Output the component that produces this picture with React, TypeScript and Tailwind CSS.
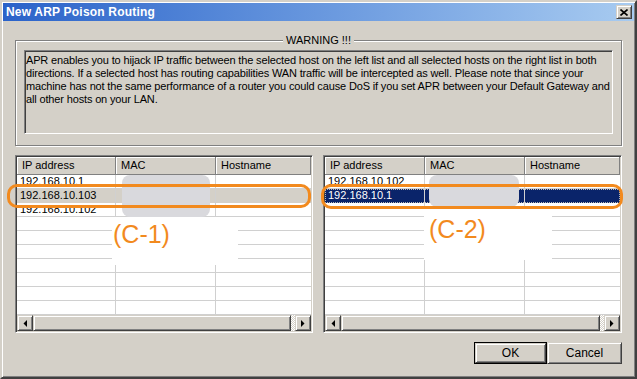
import React from "react";

const raised =
  "border border-t-[#d4d0c8] border-l-[#d4d0c8] border-r-[#404040] border-b-[#404040] shadow-[inset_1px_1px_0_#fff,inset_-1px_-1px_0_#808080] bg-[#d4d0c8]";
const sunken =
  "border border-t-[#808080] border-l-[#808080] border-r-[#fff] border-b-[#fff] shadow-[inset_1px_1px_0_#404040,inset_-1px_-1px_0_#d4d0c8]";

function Arrow({ dir }: { dir: "left" | "right" }) {
  return (
    <div className={`w-[16px] h-[16px] flex items-center justify-center ${raised}`}>
      <svg width="4" height="7" viewBox="0 0 4 7">
        {dir === "left" ? (
          <polygon points="4,0 4,7 0.5,3.5" fill="#000" />
        ) : (
          <polygon points="0,0 0,7 3.5,3.5" fill="#000" />
        )}
      </svg>
    </div>
  );
}

type ListProps = {
  rows: string[];
  selected: number;
  active: boolean;
  cols: number[];
};

function ListView({ rows, selected, active, cols }: ListProps) {
  const allRows = Array.from({ length: 10 }, (_, i) => rows[i] ?? "");
  const headers = ["IP address", "MAC", "Hostname"];
  return (
    <div className={`flex flex-col h-full bg-white ${sunken} p-[1px]`}>
      <div className="flex h-[18px] shrink-0">
        {headers.map((h, i) => (
          <div
            key={h}
            style={{ width: cols[i] }}
            className={`h-full flex items-center pl-[5px] text-[11px] text-black bg-[#d4d0c8] border-r border-b border-r-[#808080] border-b-[#808080] shadow-[inset_1px_1px_0_#fff] ${i === 2 ? "flex-1" : "shrink-0"}`}
          >
            {h}
          </div>
        ))}
      </div>
      <div className="flex-1 flex flex-col bg-white">
        {allRows.map((r, i) => {
          const isSel = i === selected;
          const rowBg = isSel
            ? active
              ? "bg-[#0a246a] text-white outline outline-1 outline-dotted outline-[#b8b8b8] -outline-offset-1"
              : "bg-[#d4d0c8] text-black"
            : "text-black";
          return (
            <div key={i} className={`flex h-[14px] ${rowBg}`}>
              {[0, 1, 2].map((c) => (
                <div
                  key={c}
                  style={c < 2 ? { width: cols[c] } : undefined}
                  className={`h-full text-[11px] leading-[13px] pl-[3px] whitespace-nowrap overflow-hidden ${c === 2 ? "flex-1" : "shrink-0 border-r border-r-[#d0d0d0]"} ${isSel ? "" : "border-b border-b-[#d0d0d0]"}`}
                >
                  {c === 0 ? r : ""}
                </div>
              ))}
            </div>
          );
        })}
      </div>
      <div className="flex h-[16px] shrink-0">
        <Arrow dir="left" />
        <div className="flex-1 flex">
          <div className={`flex-1 ${raised}`} />
          <div className="w-[4px] bg-[repeating-conic-gradient(#fff_0_25%,#d4d0c8_0_50%)] bg-[length:2px_2px]" />
        </div>
        <Arrow dir="right" />
      </div>
    </div>
  );
}

export default function App() {
  return (
    <div
      className="relative w-[637px] h-[379px] bg-[#d4d0c8] border-2 border-t-[#d4d0c8] border-l-[#d4d0c8] border-r-[#404040] border-b-[#404040] shadow-[inset_1px_1px_0_#fff,inset_-1px_-1px_0_#808080] p-[1px] flex flex-col overflow-hidden"
      style={{ fontFamily: '"Liberation Sans", Arial, sans-serif' }}
    >
      {/* Title bar */}
      <div className="h-[18px] shrink-0 flex items-center bg-gradient-to-r from-[#2a62c9] to-[#a8cbf0] pl-[3px] pr-[2px]">
        <span className="text-white font-bold text-[12px] leading-none tracking-[0.2px]">New ARP Poison Routing</span>
        <div className="flex-1" />
        <div className={`w-[16px] h-[14px] flex items-center justify-center ${raised}`}>
          <svg width="8" height="7" viewBox="0 0 8 7">
            <path d="M0.5 0.5 L7.5 6.5 M7.5 0.5 L0.5 6.5" stroke="#000" strokeWidth="1.6" />
          </svg>
        </div>
      </div>

      {/* Body */}
      <div className="flex-1 flex flex-col px-[12px] pt-[19px]">
        {/* Group box */}
        <div className="relative h-[106px] shrink-0 border border-[#808080] shadow-[inset_1px_1px_0_#fff,1px_1px_0_#fff] pl-[8px] pr-[8px] pt-[9px] pb-[11px]">
          <div className="absolute left-0 right-0 -top-[7px] flex justify-center">
            <span className="bg-[#d4d0c8] px-[3px] text-[11px] leading-[13px] text-black">WARNING !!!</span>
          </div>
          <div className={`h-full ${sunken} bg-[#d4d0c8] pl-[1px] pt-[3px]`}>
            <p className="text-[11px] leading-[13px] text-black whitespace-nowrap tracking-[-0.15px]">
              APR enables you to hijack IP traffic between the selected host on the left list and all selected hosts on the right list in both
              <br />
              directions. If a selected host has routing capabilities WAN traffic will be intercepted as well. Please note that since your
              <br />
              machine has not the same performance of a router you could cause DoS if you set APR between your Default Gateway and
              <br />
              all other hosts on your LAN.
            </p>
          </div>
        </div>

        {/* Lists */}
        <div className="flex gap-[10px] mt-[9px] h-[178px] shrink-0">
          <div className="w-[298px] h-full">
            <ListView rows={["192.168.10.1", "192.168.10.103", "192.168.10.102"]} selected={1} active={false} cols={[99, 100]} />
          </div>
          <div className="w-[299px] h-full">
            <ListView rows={["192.168.10.102", "192.168.10.1"]} selected={1} active={true} cols={[100, 100]} />
          </div>
        </div>

        {/* Buttons */}
        <div className="flex justify-end mt-[9px]">
          <div className="w-[73px] h-[22px] border border-black">
            <button className={`w-full h-full text-[12px] text-black flex items-center justify-center ${raised}`}>OK</button>
          </div>
          <button className={`w-[75px] h-[22px] text-[12px] text-black flex items-center justify-center ${raised}`}>Cancel</button>
        </div>
      </div>

      {/* Annotation overlays */}
      <div className="absolute left-[120px] top-[173px] w-[88px] h-[42px] rounded-[8px] bg-[#d9d9dd]" />
      <div className="absolute left-[427px] top-[173px] w-[90px] h-[32px] rounded-[8px] bg-[#d9d9dd]" />
      <div className="absolute left-[110px] top-[215px] w-[126px] h-[48px] bg-white" />
      <div className="absolute left-[422px] top-[205px] w-[128px] h-[53px] bg-white" />
      <div className="absolute left-[111px] top-[220px] text-[25px] leading-none text-[#f28a1e]">(C-1)</div>
      <div className="absolute left-[427px] top-[215px] text-[25px] leading-none text-[#f28a1e]">(C-2)</div>
      <div className="absolute left-[5px] top-[182px] w-[304px] h-[24px] border-[3px] border-[#f28a1e] rounded-[10px]" />
      <div className="absolute left-[319px] top-[182px] w-[302px] h-[25px] border-[3px] border-[#f28a1e] rounded-[10px]" />
    </div>
  );
}
